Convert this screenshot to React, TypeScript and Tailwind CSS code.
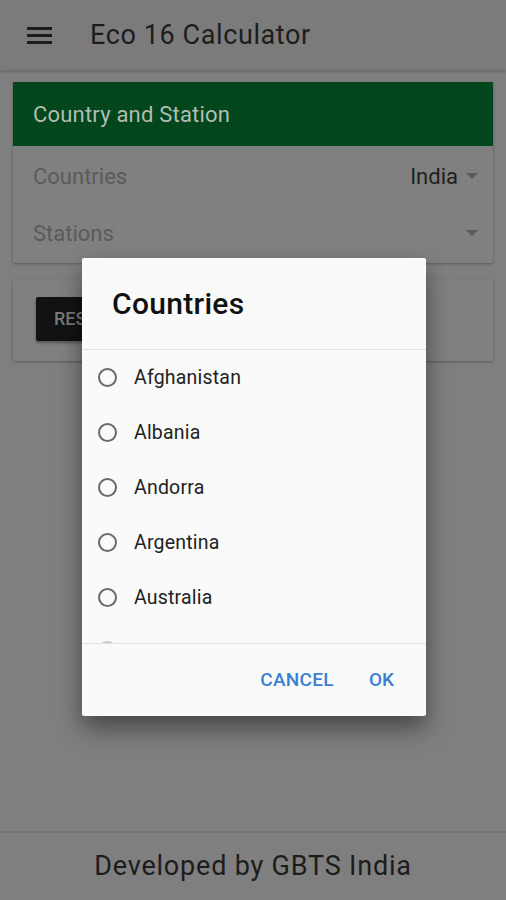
import React from "react";

const countries = ["Afghanistan", "Albania", "Andorra", "Argentina", "Australia"];

function Caret() {
  return (
    <svg width="12" height="7" viewBox="0 0 12 7" className="block">
      <path d="M0 0 L12 0 L6 6 Z" fill="#5a5a5a" />
    </svg>
  );
}

export default function App() {
  return (
    <div
      className="relative w-[506px] h-[900px] bg-[#7f7f7f] overflow-hidden flex flex-col"
      style={{ fontFamily: "Roboto, 'Noto Sans', sans-serif" }}
    >
      {/* App bar */}
      <div className="h-[70px] bg-[#7b7b7b] flex items-center shadow-[0_2px_3px_rgba(0,0,0,0.18)] shrink-0">
        <div className="ml-[27px] w-[25px] flex flex-col gap-[4px]">
          <div className="h-[3px] bg-[#1d1d1d]" />
          <div className="h-[3px] bg-[#1d1d1d]" />
          <div className="h-[3px] bg-[#1d1d1d]" />
        </div>
        <div className="ml-[38px] text-[27px] tracking-[0.6px] text-[#1d1d1d] leading-none">Eco 16 Calculator</div>
      </div>

      <div className="flex-1 flex flex-col px-[13px] pt-[12px] gap-[16px]">
        {/* Card 1 */}
        <div className="bg-[#808080] rounded-[2px] shadow-[0_1px_3px_rgba(0,0,0,0.3)] h-[181px] flex flex-col">
          <div className="h-[64px] bg-[#01461c] flex items-center pl-[20px] text-[22px] tracking-[0.2px] text-[#b3bdb3]">
            Country and Station
          </div>
          <div className="h-[58px] flex items-center justify-between pl-[20px] pr-[15px] mt-[1px]">
            <span className="text-[22px] text-[#5a5a5a]">Countries</span>
            <span className="flex items-center gap-[8px]">
              <span className="text-[22px] text-[#1f1f1f]">India</span>
              <Caret />
            </span>
          </div>
          <div className="h-[56px] flex items-center justify-between pl-[20px] pr-[15px]">
            <span className="text-[22px] text-[#5a5a5a]">Stations</span>
            <Caret />
          </div>
        </div>

        {/* Card 2 */}
        <div className="bg-[#808080] rounded-[2px] shadow-[0_1px_3px_rgba(0,0,0,0.3)] h-[82px] flex items-center pl-[23px]">
          <div className="h-[44px] w-[100px] bg-[#121212] rounded-[2px] shadow-[0_2px_3px_rgba(0,0,0,0.35)] flex items-center pl-[18px] text-[18px] font-medium text-[#7a7a7a] -mt-[3px]">
            RESET
          </div>
        </div>
      </div>

      {/* Footer */}
      <div className="h-[69px] border-t-[2px] border-[#737373] flex items-center justify-center shrink-0">
        <span className="text-[27px] tracking-[0.8px] text-[#1c1c1c]">Developed by GBTS India</span>
      </div>

      {/* Dialog */}
      <div className="absolute left-[82px] top-[258px] w-[344px] h-[458px] bg-[#fafafa] rounded-[2px] shadow-[0_12px_24px_rgba(0,0,0,0.45)] flex flex-col">
        <div className="h-[91px] flex items-center pl-[30px] text-[30px] tracking-[0.3px] font-medium text-[#111111] shrink-0">
          Countries
        </div>
        <div className="h-[1px] bg-[#e2e2e2] shrink-0" />
        <div className="h-[293px] overflow-hidden flex flex-col shrink-0">
          {countries.map((c) => (
            <div key={c} className="h-[55px] flex items-center shrink-0">
              <div className="ml-[16px] w-[19px] h-[19px] rounded-full border-[2px] border-[#6a6a6a]" />
              <span className="ml-[17px] text-[19.5px] tracking-[0.2px] text-[#222222]">{c}</span>
            </div>
          ))}
          <div className="h-[55px] flex items-start shrink-0 pt-[16px]">
            <div className="ml-[16px] w-[19px] h-[19px] rounded-full border-[2px] border-[#c8c8c8]" />
          </div>
        </div>
        <div className="h-[1px] bg-[#e2e2e2] shrink-0" />
        <div className="flex-1 flex items-center justify-end pr-[32px] gap-[35px]">
          <span className="text-[19px] font-medium text-[#3a80d2] tracking-[0.3px]">CANCEL</span>
          <span className="text-[19px] font-medium text-[#3a80d2]">OK</span>
        </div>
      </div>
    </div>
  );
}
